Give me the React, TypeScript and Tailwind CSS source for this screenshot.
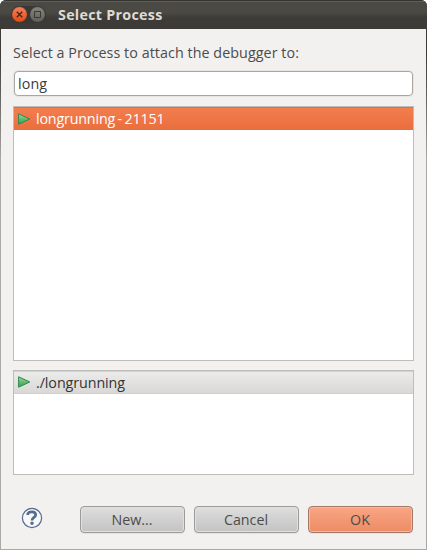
import React from 'react';

function RunIcon() {
  return (
    <svg width="13" height="13" viewBox="0 0 13 13" className="shrink-0">
      <defs>
        <linearGradient id="run" x1="0" y1="0" x2="0" y2="1">
          <stop offset="0" stopColor="#a4d8a4" />
          <stop offset="0.5" stopColor="#66b873" />
          <stop offset="1" stopColor="#35a350" />
        </linearGradient>
      </defs>
      <path d="M0.6 0.8 L11.8 6 L0.6 11.2 Z" fill="url(#run)" stroke="#2c8a4d" strokeLinejoin="round" />
    </svg>
  );
}

function DialogButton({ label, primary = false }: { label: string; primary?: boolean }) {
  const tone = primary
    ? 'border-[#a3796a] bg-linear-to-b from-[#f9a583] to-[#ed8c65] shadow-[inset_0_0_0_1px_#fab799,0_1px_0_#e5e3e1]'
    : 'border-[#9b9b99] bg-linear-to-b from-[#dedede] to-[#c3c3c3] shadow-[inset_0_0_0_1px_#e0e0e0,0_1px_0_#e5e3e1]';
  return (
    <button className={`flex h-[27px] w-[105px] items-center justify-center rounded-[4px] border pr-px text-[#4c4c4c] ${tone}`}>
      <span className="whitespace-nowrap">{label}</span>
    </button>
  );
}

export default function App() {
  return (
    <div className="h-[550px] w-[427px] bg-white font-['Open_Sans','Noto_Sans',sans-serif] text-[14.3px] leading-[20px]">
      <div className="flex h-full flex-col overflow-hidden rounded-t-[6px] bg-[#3c3b37]">
        <header className="flex h-[29px] shrink-0 items-center border-t border-[#353430] bg-linear-to-b from-[#4a4944] from-40% to-[#3c3b37] to-60% pl-[11px] shadow-[inset_0_1px_0_#605e58]">
          <div className="mb-px flex gap-px rounded-full bg-[#393834]">
            <svg width="17" height="17" viewBox="0 0 17 17">
              <defs>
                <linearGradient id="close" x1="0" y1="0" x2="0" y2="1">
                  <stop offset="0" stopColor="#f58059" />
                  <stop offset="1" stopColor="#e44b10" />
                </linearGradient>
              </defs>
              <circle cx="8.5" cy="8.5" r="7.7" fill="url(#close)" stroke="#35302b" strokeWidth="0.4" />
              <path d="M5.8 5.8 L11.2 11.2 M11.2 5.8 L5.8 11.2" stroke="#3b291e" strokeWidth="1.3" />
            </svg>
            <svg width="17" height="17" viewBox="0 0 17 17">
              <defs>
                <linearGradient id="maximize" x1="0" y1="0" x2="0" y2="1">
                  <stop offset="0" stopColor="#85847d" />
                  <stop offset="1" stopColor="#605f58" />
                </linearGradient>
              </defs>
              <circle cx="8.5" cy="8.5" r="7.7" fill="url(#maximize)" stroke="#32312d" strokeWidth="0.4" />
              <path d="M5.5 5.5 H11.5 V11.5 H5.5 Z" fill="none" stroke="#3a3934" />
            </svg>
          </div>
          <h1 className="ml-[12px] whitespace-nowrap font-bold tracking-[0.27px] text-[#dfdbd2]">Select Process</h1>
        </header>
        <div className="flex min-h-0 flex-1 bg-linear-to-b from-[#3c3b37] from-5% to-[#aaa8a4] to-25% px-px pb-px">
          <main className="flex flex-1 flex-col bg-[#f2f1f0] px-3 pt-[14px]">
            <label className="h-[20px] whitespace-nowrap tracking-[0.06px] text-[#4c4c4c]">Select a Process to attach the debugger to:</label>
            <div className="mx-px mt-[8px] flex h-[25px] shrink-0 items-center rounded-[4px] border border-[#a9a6a2] bg-white pl-[3px] tracking-[0.1px] text-[#3c3c3c] shadow-[0_0_0_1px_#e8e6e4]">long</div>
            <section className="mt-[10px] h-[255px] shrink-0 border border-[#bfbdb9] bg-white">
              <div className="flex h-[23px] items-center border-t border-[#dc6f45] bg-linear-to-b from-[#f37d4e] to-[#ea6e3d] pl-1 text-white">
                <RunIcon />
                <span className="ml-[5px] whitespace-nowrap tracking-[-0.18px] [word-spacing:-1px]">longrunning - 21151</span>
              </div>
            </section>
            <section className="mt-[9px] h-[105px] shrink-0 border border-[#bfbdb9] bg-white">
              <div className="flex h-[23px] items-center border-y border-t-[#d4d2cf] border-b-[#d1cfcc] bg-linear-to-b from-[#ebebea] to-[#d9d8d6] pl-1 text-[#333333]">
                <RunIcon />
                <span className="ml-[5px] whitespace-nowrap tracking-[-0.08px]">./longrunning</span>
              </div>
            </section>
            <footer className="mt-[31px] flex items-center">
              <svg className="mb-[3px] ml-[8px]" width="22" height="22" viewBox="0 0 22 22">
                <circle cx="11" cy="11" r="9.6" fill="#f8f8f8" stroke="#566c8e" strokeWidth="1.2" />
                <path d="M6.8 8.1 V6.6 C8 4.4 14.6 3.8 14.7 7.8 C14.8 10.5 11 10.4 11 13.4" fill="none" stroke="#566c8e" strokeWidth="2.7" />
                <rect x="9.4" y="14.8" width="3.2" height="3" rx="0.8" fill="#566c8e" />
              </svg>
              <div className="ml-[37px] flex gap-[9px]">
                <DialogButton label="New..." />
                <DialogButton label="Cancel" />
                <DialogButton label="OK" primary />
              </div>
            </footer>
          </main>
        </div>
      </div>
    </div>
  );
}
